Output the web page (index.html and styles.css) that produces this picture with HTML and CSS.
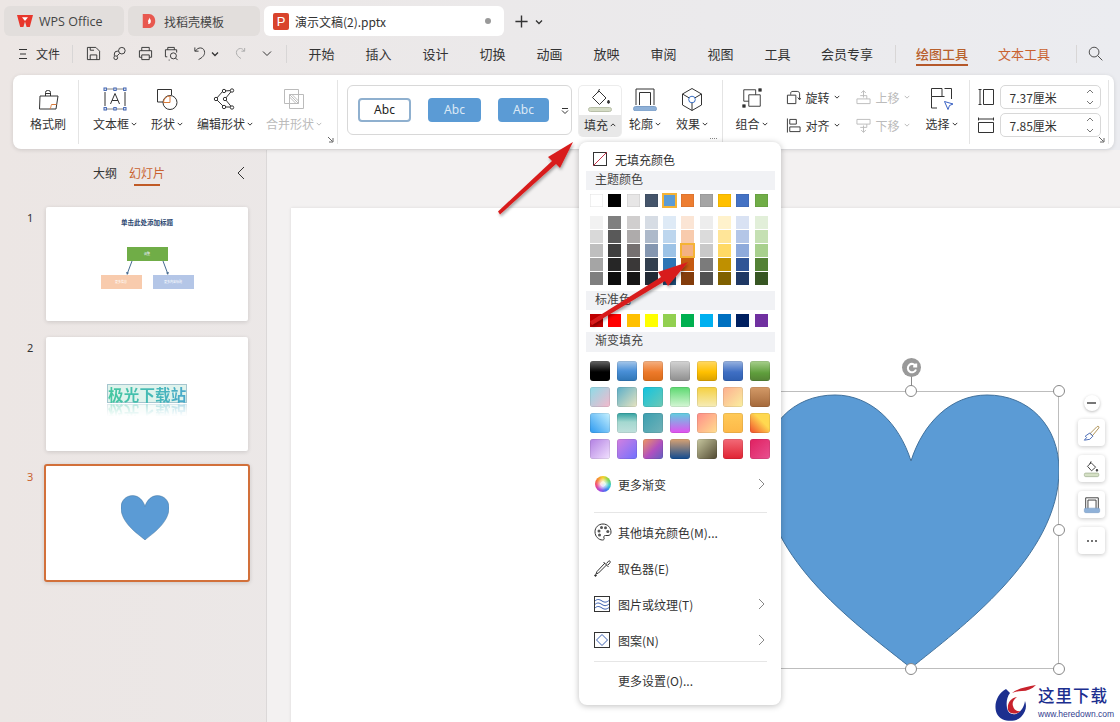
FILE: index.html
```html
<!DOCTYPE html>
<html lang="zh-CN">
<head>
<meta charset="utf-8">
<title>演示文稿(2).pptx - WPS Office</title>
<link rel="stylesheet" href="styles.css">
</head>
<body>
<div class="app">

  <!-- title tabs -->
  <div class="tabbar">
    <div class="tab tab-home">
      <svg class="tab-ico" viewBox="0 0 16 12"><path d="M0 0h16l-3.200 12H9.600L8 6.500 6.400 12H3.200z" fill="#e8372c"/><path d="M5 2.200h6L8 6z" fill="#fff"/></svg>
      <span class="wps-name">WPS Office</span>
    </div>
    <div class="tab tab-tpl">
      <svg class="tab-ico" viewBox="0 0 14 18"><path d="M0 1h7c4 0 7 3.500 7 8s-3 8-7 8H0z" fill="#e8584f"/><path d="M7.500 5c.5 2 2 2.500 1.500 5-.3 1.500-1.500 2.500-3 2.500 1-1.500-.5-2.500 0-4 .5-1 1.300-2 1.500-3.500z" fill="#fff"/></svg>
      <span>找稻壳模板</span>
    </div>
    <div class="tab tab-doc">
      <span class="ppt-badge">P</span>
      <span class="doc-name">演示文稿(2).pptx</span>
      <i class="tab-dot"></i>
    </div>
    <svg class="tab-add" viewBox="0 0 16 16"><path d="M8 1.500v13M1.500 8h13"/></svg>
    <svg class="caret-s tab-more" viewBox="0 0 8 8"><path d="M1 2.500l3 3 3-3"/></svg>
  </div>

  <!-- quick access + menu -->
  <div class="menubar">
    <svg class="burger" viewBox="0 0 9 12"><path d="M0 1.500h8M1 6h6M0 10.500h8"/></svg>
    <span class="file-btn">文件</span>
    <i class="vsep"></i>
    <div class="quick">
      <svg class="q" viewBox="0 0 16 16"><path d="M1.500 1.500h9l4 4v9h-13zM4.500 14.500v-5h7v5M4.500 1.500v3h4"/></svg>
      <svg class="q" viewBox="0 0 16 16"><circle cx="10.500" cy="5" r="3.500"/><path d="M8 8L5.500 10.500M7 5.500H5.500A3 3 0 0 0 2.500 8.500v2"/><circle cx="4" cy="12.500" r="2"/></svg>
      <svg class="q" viewBox="0 0 16 16"><path d="M4 5V1.500h8V5M4 12H1.500V5h13v7H12M4 9.500h8v5H4z"/></svg>
      <svg class="q" viewBox="0 0 16 16"><path d="M4 4V1.500h7V4M3.500 11.500h-2V4h12v3M6 15h-1"/><circle cx="10" cy="10.500" r="3.200"/><path d="M12.300 12.800l2.200 2.200"/></svg>
      <svg class="q q-undo" viewBox="0 0 14 16"><path d="M2 1.500v4h4M2.500 5.500C4 3 6 2 8 2c3 0 4.500 2.500 4.500 5 0 3-2.500 5.500-6.500 7.500"/></svg>
      <svg class="caret-s q-caret" viewBox="0 0 8 8"><path d="M1 2.500l3 3 3-3"/></svg>
      <svg class="q q-redo" viewBox="0 0 12 14"><path d="M10.500 1v3.500H7M10 4.500C9 2.500 7.500 1.500 6 1.500 3.500 1.500 1.500 3.500 1.500 6c0 2 1.500 4.500 5 6.500"/></svg>
      <svg class="caret-m" viewBox="0 0 10 8"><path d="M1 1.500l4 4 4-4"/></svg>
    </div>
    <i class="vsep vsep-b"></i>
    <nav class="nav">
      <span>开始</span><span>插入</span><span>设计</span><span>切换</span><span>动画</span>
      <span>放映</span><span>审阅</span><span>视图</span><span>工具</span>
    </nav>
    <span class="nav-vip">会员专享</span>
    <i class="vsep vsep-c"></i>
    <span class="nav-tool active">绘图工具</span>
    <span class="nav-tool">文本工具</span>
    <i class="vsep vsep-d"></i>
    <svg class="search" viewBox="0 0 16 16"><circle cx="6.500" cy="6.500" r="5.200"/><path d="M10.300 10.300l5 5"/></svg>
  </div>

  <!-- ribbon -->
  <div class="ribbon">
    <div class="rgroup g-brush">
      <div class="tool w-brush">
        <svg class="ico" viewBox="0 0 24 24"><path d="M9.500 9V5.500a2 2 0 0 1 2-2h1a2 2 0 0 1 2 2V9M9.500 6.500h5M4 9h18l-2 13H3.500z"/><path d="M14 22c1-2 1-3 1.500-4.500h5" stroke="#d97a3a"/></svg>
        <span class="lbl">格式刷</span>
      </div>
    </div>
    <div class="rgroup g-shape">
      <div class="tool w-tb">
        <svg class="ico" viewBox="0 0 24 24"><path d="M2 2h20M2 22h20" stroke="#666" stroke-width=".8"/><path d="M7.500 17L12 6.500 16.500 17M9 13.500h6"/><path d="M2 5v14M22 5v14" stroke="#333"/><g fill="#fff" stroke="#3a5fb0"><rect x="1" y="1" width="2.400" height="2.400"/><rect x="20.600" y="1" width="2.400" height="2.400"/><rect x="1" y="20.600" width="2.400" height="2.400"/><rect x="20.600" y="20.600" width="2.400" height="2.400"/><rect x="10.800" y="1" width="2.400" height="2.400"/><rect x="10.800" y="20.600" width="2.400" height="2.400"/></g></svg>
        <span class="lbl">文本框<svg class="caret-s" viewBox="0 0 8 8"><path d="M1 2.500l3 3 3-3"/></svg></span>
      </div>
      <div class="tool w-sh">
        <svg class="ico" viewBox="0 0 24 24"><path d="M9 15H2.500V2.500h14V8"/><circle cx="15" cy="15.500" r="7"/><path d="M15 15.500V9M15 15.500H8.500M8.500 15.500A6.500 6.500 0 0 1 15 9" stroke="#d97a3a"/></svg>
        <span class="lbl">形状<svg class="caret-s" viewBox="0 0 8 8"><path d="M1 2.500l3 3 3-3"/></svg></span>
      </div>
      <div class="tool w-ed">
        <svg class="ico" viewBox="0 0 24 24"><path d="M10 4L3 12l8 8h8M19 3.500L11 4M19 3.500L12 12l7 8.500"/><g fill="#fff" stroke="#333"><circle cx="11" cy="4" r="1.700"/><circle cx="19" cy="3.500" r="1.700"/><circle cx="3" cy="12" r="1.700"/><circle cx="12" cy="12" r="1.700"/><circle cx="11" cy="20" r="1.700"/><circle cx="19" cy="20.500" r="1.700"/></g></svg>
        <span class="lbl">编辑形状<svg class="caret-s" viewBox="0 0 8 8"><path d="M1 2.500l3 3 3-3"/></svg></span>
      </div>
      <div class="tool w-mg off">
        <svg class="ico" viewBox="0 0 24 24"><path d="M2.500 2.500h14v14h-14zM7.500 7.500h14v14h-14zM7.500 7.500l9 9M10 7.500l6.500 6.500M7.500 10l6.500 6.500"/></svg>
        <span class="lbl">合并形状<svg class="caret-s" viewBox="0 0 8 8"><path d="M1 2.500l3 3 3-3"/></svg></span>
      </div>
      <svg class="launcher" viewBox="0 0 7 7"><path d="M1 1l4.500 4.500M6 2v4H2"/></svg>
    </div>
    <div class="rgroup g-style">
      <div class="gallery">
        <span class="abc abc-a">Abc</span>
        <span class="abc abc-b">Abc</span>
        <span class="abc abc-c">Abc</span>
        <svg class="gal-more" viewBox="0 0 8 8"><path d="M1 1.500h6M1 3.500l3 3 3-3"/></svg>
      </div>
      <div class="tool w-fill pressed">
        <svg class="ico" viewBox="0 0 24 24"><path d="M4.500 9.500L11 3l7 7-6.500 6.500zM11.500 1L9.500 5"/><path d="M20.500 12c.8 1.200 1 1.700 1 2.300a1 1 0 0 1-2 0c0-.6.300-1.100 1-2.300z" fill="#333"/><rect x=".500" y="19.500" width="23" height="4" rx="2" fill="#d5dcc5" stroke="#b8bfa8"/></svg>
        <span class="lbl">填充<svg class="caret-s" viewBox="0 0 8 8"><path d="M1 5.500l3-3 3 3"/></svg></span>
      </div>
      <div class="tool w-line">
        <svg class="ico" viewBox="0 0 24 24"><path d="M3 18V2h18v16M6.500 18V5.500h11V18"/><rect x=".500" y="19.500" width="23" height="4.500" rx="2.200" fill="#8fb1d8" stroke="#7ea0c8"/></svg>
        <span class="lbl">轮廓<svg class="caret-s" viewBox="0 0 8 8"><path d="M1 2.500l3 3 3-3"/></svg></span>
      </div>
      <div class="tool w-fx">
        <svg class="ico" viewBox="0 0 24 24"><path d="M12 1.500l9.500 5.500v11L12 23.500 2.500 18V7zM2.500 7l6.500 3.800M21.500 7L15 10.800M12 23.500V15.500"/><circle cx="12" cy="12.500" r="3.300" stroke="#3a6fc4"/></svg>
        <span class="lbl">效果<svg class="caret-s" viewBox="0 0 8 8"><path d="M1 2.500l3 3 3-3"/></svg></span>
      </div>
      <span class="dots-mark"></span>
    </div>
    <div class="rgroup g-arrange">
      <div class="tool w-grp">
        <svg class="ico ico-grp" viewBox="0 0 24 24"><path d="M8.500 15.500H3V3h13v5.500M8.500 8.500H21V21H8.500z"/><rect x="19.500" y="2" width="2.500" height="2.500" fill="#333"/><rect x="2" y="19.500" width="2.500" height="2.500" fill="#333"/></svg>
        <span class="lbl">组合<svg class="caret-s" viewBox="0 0 8 8"><path d="M1 2.500l3 3 3-3"/></svg></span>
      </div>
      <div class="stack w-rot">
        <div class="mini">
          <svg class="mi" viewBox="0 0 16 16"><path d="M1.500 5.500h9v9h-9zM5 5V3.500C5 2 6 1.500 7.500 1.500H12c1.500 0 2.500 1 2.500 2.500v6M12.500 8l2 2.500 2-2.500"/></svg>
          <span>旋转</span><svg class="caret-s" viewBox="0 0 8 8"><path d="M1 2.500l3 3 3-3"/></svg>
        </div>
        <div class="mini">
          <svg class="mi" viewBox="0 0 16 16"><path d="M1.500 .5v15M4 1.500h7v5H4zM4 9.500h11v5H4z"/></svg>
          <span>对齐</span><svg class="caret-s" viewBox="0 0 8 8"><path d="M1 2.500l3 3 3-3"/></svg>
        </div>
      </div>
      <div class="stack w-mv off">
        <div class="mini">
          <svg class="mi" viewBox="0 0 16 16"><path d="M8 8V.8M5.500 3L8 .8 10.500 3M4.500 6h7v3.500M1 9.500h14v5H1z"/></svg>
          <span>上移</span><svg class="caret-s" viewBox="0 0 8 8"><path d="M1 2.500l3 3 3-3"/></svg>
        </div>
        <div class="mini">
          <svg class="mi" viewBox="0 0 16 16"><path d="M8 8v7.200M5.500 13L8 15.200 10.500 13M4.500 10h7V6.500M1 6.500h14v-5H1z"/></svg>
          <span>下移</span><svg class="caret-s" viewBox="0 0 8 8"><path d="M1 2.500l3 3 3-3"/></svg>
        </div>
      </div>
      <div class="tool w-sel">
        <svg class="ico" viewBox="0 0 24 24"><path d="M7 21H1.500V9.500h13M1.500 9.500V1.500H12v8M14.500 1.500h7V12"/><path d="M14.500 14.500l8.500 2.500-3.500 1.500-1.500 4z" fill="#fff" stroke="#3a62c4"/></svg>
        <span class="lbl">选择<svg class="caret-s" viewBox="0 0 8 8"><path d="M1 2.500l3 3 3-3"/></svg></span>
      </div>
    </div>
    <div class="rgroup g-size">
      <div class="size-row">
        <svg class="si" viewBox="0 0 16 16"><path d="M.5 .5h3M.5 15.500h3M2 .5v15M5.500 .5h10v15h-10z"/></svg>
        <div class="spin"><span>7.37厘米</span><svg viewBox="0 0 8 18"><path d="M1 5l3-3 3 3M1 13l3 3 3-3"/></svg></div>
      </div>
      <div class="size-row">
        <svg class="si" viewBox="0 0 16 16"><path d="M.5 .5v3M15.500 .5v3M.5 2h15M.5 5.500h15v10H.5z"/></svg>
        <div class="spin"><span>7.85厘米</span><svg viewBox="0 0 8 18"><path d="M1 5l3-3 3 3M1 13l3 3 3-3"/></svg></div>
      </div>
      <svg class="launcher" viewBox="0 0 7 7"><path d="M1 1l4.500 4.500M6 2v4H2"/></svg>
    </div>
    <div class="rgroup g-tail"></div>
  </div>

  <!-- main -->
  <div class="main">
    <aside class="side">
      <div class="side-tabs">
        <span class="st">大纲</span>
        <span class="st st-on">幻灯片</span>
        <svg class="side-back" viewBox="0 0 8 14"><path d="M7 1L1 7l6 6"/></svg>
      </div>
      <div class="thumb-row">
        <span class="num">1</span>
        <div class="thumb th1">
          <div class="th1-title">单击此处添加标题</div>
          <div class="th1-top"><span>调整</span></div>
          <svg class="th1-lines" viewBox="0 0 93 14"><path d="M31 0L26.500 12M62 0L66.500 12" stroke="#44698f"/><path d="M25 11l1 3 2-2.300zM68 11l-1 3-2-2.300z" fill="#44698f" stroke="none"/></svg>
          <div class="th1-bottom"><span class="peach">更多信息</span><span class="lav">更多内容标题</span></div>
        </div>
      </div>
      <div class="thumb-row">
        <span class="num">2</span>
        <div class="thumb th2">
          <div class="th2-word"><span>极光下载站</span></div>
        </div>
      </div>
      <div class="thumb-row row-cur">
        <span class="num">3</span>
        <div class="thumb th3">
          <svg class="th3-heart" viewBox="0 0 296 278"><path d="M148 277C100 238 0 170 0 79 0 35 30 4 72 4c36 0 64 28 76 66C160 32 188 4 224 4c42 0 72 31 72 75 0 91-100 159-148 198z" fill="#5b9bd5" stroke="#41719c" stroke-width="3"/></svg>
        </div>
      </div>
    </aside>
    <section class="canvas">
      <div class="slide">
        <div class="sel">
          <svg class="heart" viewBox="0 0 296 278"><path d="M148 277C100 238 0 170 0 79 0 35 30 4 72 4c36 0 64 28 76 66C160 32 188 4 224 4c42 0 72 31 72 75 0 87-100 159-148 198z" fill="#5b9bd5" stroke="#41719c"/></svg>
          <i class="h h-tm"></i><i class="h h-tr"></i><i class="h h-mr"></i><i class="h h-bm"></i><i class="h h-br"></i>
          <i class="rot-line"></i>
          <span class="rot"><svg viewBox="0 0 12 12"><path d="M9.800 4.200A4.200 4.200 0 1 0 10 7.500M10.200 1.500v3h-3"/></svg></span>
        </div>
        <div class="float-tools">
          <span class="ft-min"><i></i></span>
          <span class="ft"><svg viewBox="0 0 20 20"><path d="M8 10.500L15.500 3c1.200-1 3-.2 2 1.500L10.500 13z" stroke="#a88a4a"/><path d="M7.500 10L11 13.500 7.500 17 1.500 18l2.500-3-1.500-1.500z" stroke="#3a5fb0"/></svg></span>
          <span class="ft"><svg viewBox="0 0 20 20"><path d="M5 7l4-4 5 5-4.500 4zM9 1.500L7.500 4.500"/><path d="M15.500 10c.6.900.8 1.300.8 1.700a.8.800 0 0 1-1.600 0c0-.4.200-.8.800-1.700z" fill="#333"/><rect x="1.500" y="14.500" width="16" height="4" rx="1.500" fill="#d5e0c5" stroke="#98a888" stroke-width=".7"/></svg></span>
          <span class="ft"><svg viewBox="0 0 20 20"><path d="M3 15V2h14v13M5.500 15V4.500h9V15"/><rect x="1.500" y="13.500" width="17" height="5" rx="1.500" fill="#8fb1d8" stroke="#7ea0c8" stroke-width=".7"/></svg></span>
          <span class="ft"><svg class="ft-dots" viewBox="0 0 12 4"><circle cx="2" cy="2" r="1"/><circle cx="6" cy="2" r="1"/><circle cx="10" cy="2" r="1"/></svg></span>
        </div>
      </div>
    </section>
  </div>

  <!-- fill dropdown -->
  <div class="popup">
    <div class="nofill">
      <svg class="nf-ico" viewBox="0 0 14 14"><rect x=".5" y=".5" width="13" height="13" fill="none" stroke="#333"/><path d="M0 14L14 0" stroke="#c8324a"/></svg>
      <span>无填充颜色</span>
    </div>
    <div class="band">主题颜色</div>
    <div class="swatches theme"><i></i><i></i><i></i><i></i><i class="on"></i><i></i><i></i><i></i><i></i><i></i></div>
    <div class="swatches tints">
      <i></i><i></i><i></i><i></i><i></i><i></i><i></i><i></i><i></i><i></i>
      <i></i><i></i><i></i><i></i><i></i><i></i><i></i><i></i><i></i><i></i>
      <i></i><i></i><i></i><i></i><i></i><i class="on"></i><i></i><i></i><i></i><i></i>
      <i></i><i></i><i></i><i></i><i></i><i></i><i></i><i></i><i></i><i></i>
      <i></i><i></i><i></i><i></i><i></i><i></i><i></i><i></i><i></i><i></i>
    </div>
    <div class="band band-std">标准色</div>
    <div class="swatches std"><i></i><i></i><i></i><i></i><i></i><i></i><i></i><i></i><i></i><i></i></div>
    <div class="band band-grad">渐变填充</div>
    <div class="grads">
      <i></i><i></i><i></i><i></i><i></i><i></i><i></i>
      <i></i><i></i><i></i><i></i><i></i><i></i><i></i>
      <i></i><i></i><i></i><i></i><i></i><i></i><i></i>
      <i></i><i></i><i></i><i></i><i></i><i></i><i></i>
    </div>
    <div class="pop-item it-more">
      <span class="wheel"></span><span class="it-txt">更多渐变</span>
      <svg class="chev" viewBox="0 0 7 12"><path d="M1 1l5 5-5 5"/></svg>
    </div>
    <hr class="pop-sep sep-1">
    <div class="pop-item">
      <svg class="it-ico" viewBox="0 0 18 18"><path d="M9 1C4.500 1 1 4.300 1 8.800S4.500 17 8.500 17c1.500 0 2-1 1.500-2-.6-1.300 0-2.500 1.500-2.500H14c2 0 3-1.500 3-3.500 0-4.500-3.500-8-8-8z"/><g fill="#555" stroke="none"><circle cx="5" cy="8" r="1.500"/><circle cx="7.500" cy="4.500" r="1.500"/><circle cx="11.500" cy="4.800" r="1.500"/><circle cx="13.800" cy="8.500" r="1.500"/><circle cx="5.500" cy="12" r="1.500"/></g></svg>
      <span class="it-txt">其他填充颜色(M)...</span>
    </div>
    <div class="pop-item">
      <svg class="it-ico" viewBox="0 0 18 18"><path d="M11 4L3 12.500 2 15l2.500-1L13 5.500M9.500 3l5 5M12.500 4.500l2-2.300c1-1 2.500.5 1.500 1.500l-2 2.300"/><circle cx="1.500" cy="16.500" r=".8" fill="#333"/></svg>
      <span class="it-txt">取色器(E)</span>
    </div>
    <div class="pop-item">
      <svg class="it-ico it-sq" viewBox="0 0 16 16"><rect x=".5" y=".5" width="15" height="15"/><path d="M1 5c2-2 4-2 7 0s5 1 7-.5M1 8.500c2-2 4-2 7 0s5 1 7-.5M1 12c2-2 4-2 7 0s5 1 7-.5" stroke="#3a5fb0"/></svg>
      <span class="it-txt">图片或纹理(T)</span>
      <svg class="chev" viewBox="0 0 7 12"><path d="M1 1l5 5-5 5"/></svg>
    </div>
    <div class="pop-item">
      <svg class="it-ico it-sq" viewBox="0 0 16 16"><rect x=".5" y=".5" width="15" height="15"/><path d="M8 2.500L13.500 8 8 13.500 2.500 8z" stroke="#3a5fb0" stroke-linejoin="round"/></svg>
      <span class="it-txt">图案(N)</span>
      <svg class="chev" viewBox="0 0 7 12"><path d="M1 1l5 5-5 5"/></svg>
    </div>
    <hr class="pop-sep sep-2">
    <div class="pop-item it-last"><span class="it-txt">更多设置(O)...</span></div>
  </div>

  <!-- red arrows drawn on the shot -->
  <svg class="arrows" viewBox="0 0 1120 722">
    <defs><filter id="sh" x="-20%" y="-20%" width="140%" height="140%"><feDropShadow dx="1" dy="2" stdDeviation="1.500" flood-color="#000" flood-opacity=".35"/></filter></defs>
    <g filter="url(#sh)" fill="#d81e1e">
      <path d="M498 211.500L552 161l-4-4 25-15-13 26-4-4-56 50.500z"/>
      <path d="M590 321.500L661 277l-3-5 30-10-20 24-3-5-73 44z"/>
    </g>
  </svg>

  <!-- watermark -->
  <div class="mark">
    <svg class="mark-logo" viewBox="0 0 42 38"><path d="M12 4C3 9-1 20 3 29c4 8 18 9 24 3 5-5 6-11 4-16-1 6-4 11-9 13-5 1-8-1-9-6-1-6 0-11 3-15z" fill="#1c2f8f"/><path d="M14 25c-1-6 2-12 9-13-4 3-5 6-4 9 1 4 4 6 8 5-4 3-11 4-13-1z" fill="#c8222c"/><path d="M18 8C24 3 33 2 42 0c-4 4-9 6-14 6-4 0-7 1-10 2z" fill="#c8222c"/></svg>
    <div class="mark-txt"><b>这里下载</b><span>www.heredown.com</span></div>
  </div>
</div>
</body>
</html>
```

FILE: styles.css
```css
* { box-sizing: border-box; }
html, body { margin: 0; padding: 0; }
body {
  width: 1120px; height: 722px; overflow: hidden;
  font-family: "Noto Sans CJK SC", "Noto Sans", sans-serif;
  font-size: 12px; color: #333;
}
svg { fill: none; stroke: #333; stroke-width: 1; display: block; flex: none; }
.app {
  position: relative; width: 1120px; height: 722px;
  display: flex; flex-direction: column;
  background: linear-gradient(90deg, #ece6e4 0%, #ebe9ea 45%, #ebecf0 100%);
}

/* tabs */
.tabbar { height: 37px; padding: 6px 0 1px 4px; display: flex; align-items: stretch; }
.tab { display: flex; align-items: center; border-radius: 6px; background: #e2dedc; margin-right: 4px; color: #444; }
.tab-home { width: 120px; padding-left: 13px; }
.tab-tpl { width: 132px; padding-left: 13px; }
.tab-doc { width: 240px; padding-left: 9px; background: #fff; color: #333; }
.tab-ico { stroke: none; height: 16px; width: 16px; }
.tab-home .tab-ico { margin-right: 6px; height: 12px; }
.tab-tpl .tab-ico { margin-right: 7px; }
.wps-name { font-family: "Open Sans", sans-serif; font-size: 12.5px; }
.ppt-badge {
  width: 16px; height: 17px; background: #d9432c; color: #fff; border-radius: 2px;
  font: 13px/17px "Liberation Sans", sans-serif; text-align: center; margin-right: 6px;
}
.doc-name { flex: 1; font-size: 12px; }
.tab-dot { width: 6px; height: 6px; border-radius: 3px; background: #999; margin-right: 13px; }
.tab-add { width: 15px; height: 15px; margin: 8px 0 0 6px; stroke-width: 1.500; }
.tab-more { margin: 12px 0 0 6px; }
.caret-s { width: 6px; height: 6px; display: inline-block; stroke-width: 1.300; }
.tab-more, .q-caret { width: 8px; height: 8px; }
.caret-m { width: 10px; height: 8px; }

/* menu row */
.menubar { height: 38px; display: flex; align-items: center; padding-left: 19px; font-size: 13px; padding-bottom: 5px; }
.burger { width: 9px; height: 12px; }
.file-btn { margin-left: 8px; width: 24px; font-size: 12px; }
.vsep { width: 1px; height: 18px; background: #d8d6d6; margin-left: 12px; }
.quick { display: flex; align-items: center; margin-left: 13px; }
.q { width: 15px; height: 15px; margin-right: 11px; }
.q-undo { width: 13px; margin-right: 5px; margin-left: 3px; }
.q-caret { margin-right: 16px; }
.q-redo { width: 11px; height: 13px; margin-right: 16px; stroke: #aaa; }
.vsep-b { margin-left: 14px; }
.nav { display: flex; margin-left: 6px; }
.nav span { width: 57px; text-align: center; }
.nav-vip { margin-left: 15px; width: 52px; }
.vsep-c { margin-left: 22px; }
.nav-tool { color: #c9622f; width: 52px; margin-left: 20px; position: relative; }
.vsep + .nav-tool { margin-left: 20px; }
.nav-tool + .nav-tool { margin-left: 30px; }
.nav-tool.active { font-weight: 500; color: #b8602c; }
.nav-tool.active::after { content: ""; position: absolute; left: 0; right: 0; bottom: -3px; height: 2px; background: #b5582a; }
.vsep-d { margin-left: 26px; }
.search { width: 15px; height: 15px; margin-left: 11px; stroke: #444; }

/* ribbon */
.ribbon {
  height: 74px; width: 1101px; margin-left: 13px; position: relative; z-index: 2;
  background: #fff; border-radius: 8px; box-shadow: 0 1px 4px rgba(0, 0, 0, .13);
  display: flex; padding: 5px 0;
}
.rgroup { position: relative; display: flex; flex: none; border-right: 1px solid #e4e4e4; }
.g-brush { width: 66px; }
.g-shape { width: 259px; }
.g-style { width: 384.500px; padding: 5px 0 0 9px; align-items: flex-start; }
.g-arrange { width: 247px; }
.g-size { width: 139.500px; flex-direction: column; padding: 5px 0 0 8px; gap: 4px; }
.g-tail { border-right: 0; flex: 1; }
.tool { display: flex; flex: none; flex-direction: column; align-items: center; padding-top: 7px; height: 60px; white-space: nowrap; }
.ico { width: 24px; height: 24px; }
.ico-grp { width: 22px; height: 22px; }
.lbl { margin-top: 4px; line-height: 18px; display: flex; align-items: center; gap: 2px; }
.ico-grp + .lbl { margin-top: 6px; }
.off { color: #bbb; }
.off svg { stroke: #bbb; }
.w-brush { width: 70px; }
.w-tb { width: 52px; margin-left: 10px; }
.w-sh { width: 48px; margin-left: 2px; }
.w-ed { width: 66px; margin-left: 1px; }
.w-mg { width: 66px; margin-left: 3px; }
.launcher { position: absolute; right: 3px; bottom: 1px; width: 7px; height: 7px; stroke: #666; }
.gallery {
  width: 225px; height: 50px; flex: none; border: 1px solid #d8d8d8; border-radius: 6px;
  display: flex; align-items: center; padding-left: 10px; position: relative;
}
.abc {
  width: 53px; height: 24px; border-radius: 4px; text-align: center; line-height: 23px;
  font-family: "Noto Sans", sans-serif; font-size: 12px; margin-right: 17px;
  background: #5b9bd5; color: #dce9f5;
}
.abc-a { background: #fff; color: #222; border: 2px solid #8fb0cf; line-height: 20px; }
.abc-c { width: 51px; }
.gal-more { position: absolute; right: 2px; top: 21px; width: 8px; height: 8px; }
.w-fill, .w-line, .w-fx { height: 52px; padding-top: 2px; }
.w-fill { width: 44px; margin-left: 6px; border-radius: 5px; background: linear-gradient(#fff 0, #fff 56%, #e8e8e8 56%); border: 1px solid #ececec; border-bottom: 0; }
.w-line { width: 40px; margin-left: 3px; }
.w-fx { width: 40px; margin-left: 7px; }
.dots-mark { position: absolute; right: 5px; bottom: 3px; width: 7px; height: 3px; border-top: 1px dotted #888; }
.w-grp { width: 46px; margin-left: 6px; }
.stack { display: flex; flex: none; flex-direction: column; padding-top: 9px; gap: 12px; }
.w-rot { margin-left: 11px; width: 70px; }
.w-mv { width: 62px; }
.mini { display: flex; align-items: center; height: 16px; }
.mi { width: 15px; height: 15px; margin-right: 5px; }
.mini span { margin-right: 4px; }
.w-sel { width: 40px; margin-left: 4px; }
.size-row { display: flex; align-items: center; gap: 6px; }
.si { width: 16px; height: 16px; }
.spin {
  width: 101px; height: 24px; border: 1px solid #d8d8d8; border-radius: 5px;
  display: flex; align-items: center; justify-content: space-between; padding: 0 6px 0 9px;
}
.spin svg { width: 8px; height: 18px; stroke: #777; }

/* main */
.main { flex: 1; display: flex; min-height: 0; margin-top: 1px; }
.side { width: 267px; border-right: 1px solid #dbd8d8; position: relative; }
.side-tabs { height: 48px; display: flex; padding: 13px 0 0 93px; line-height: 19px; font-size: 12px; position: relative; }
.st { width: 24px; margin-right: 12px; }
.st-on { color: #c9622f; width: 36px; position: relative; }
.st-on::after { content: ""; position: absolute; left: 5px; right: 5px; top: 21px; height: 2px; background: #c05a26; }
.side-back { width: 8px; height: 14px; position: absolute; left: 237px; top: 16px; }
.thumb-row { display: flex; height: 114px; margin: 9px 0 16px; padding-left: 27px; }
.num { width: 19px; font-family: "Noto Sans", sans-serif; font-size: 11px; line-height: 22px; }
.thumb { width: 202px; height: 114px; background: #fff; box-shadow: 0 1px 4px rgba(0, 0, 0, .14); border-radius: 2px; }
.row-cur { margin-top: -3px; height: 118px; padding-left: 27px; }
.row-cur .num { color: #c9622f; width: 17px; padding-top: 2px; }
.th3 { width: 206px; height: 118px; border: 2px solid #d2703a; border-radius: 3px; display: flex; align-items: center; justify-content: center; }
.th3-heart { width: 48px; height: 47px; stroke: none; margin: -12px 0 0 -4px; }
.th1 { display: flex; flex-direction: column; align-items: center; padding-top: 10px; }
.th1-title { font-size: 6.500px; line-height: 10px; font-weight: 700; color: #2c4770; }
.th1-top { width: 41px; height: 14px; margin-top: 20px; background: #70ad47; color: #eef; font-size: 3px; line-height: 14px; text-align: center; }
.th1-lines { width: 93px; height: 14px; }
.th1-bottom { display: flex; gap: 11px; }
.th1-bottom span { width: 41px; height: 14px; font-size: 3px; line-height: 14px; text-align: center; color: #fff; }
.peach { background: #f8cbad; }
.lav { background: #b4c6e7; }
.th2 { display: flex; flex-direction: column; align-items: center; padding-top: 47px; }
.th2-word {
  width: 80px; height: 19px; font-size: 15.500px; line-height: 19px; font-weight: 700; text-align: center;
  background: #dff3ec; border: 1px solid #a5c6cf; white-space: nowrap; letter-spacing: .2px;
  -webkit-box-reflect: below 1px linear-gradient(transparent 35%, rgba(255, 255, 255, .4));
}
.th2-word span {
  background: linear-gradient(90deg, #45c8a0, #45b8b8 60%, #4aa8cc);
  -webkit-background-clip: text; background-clip: text; color: transparent;
}
.canvas { flex: 1; padding: 58px 0 0 24px; background: #f3f1f1; overflow: hidden; position: relative; }
.slide { width: 900px; height: 520px; background: #fff; position: relative; box-shadow: 0 0 3px rgba(0, 0, 0, .1); }
.sel { position: absolute; left: 472px; top: 183px; width: 296px; height: 278px; border: 1px solid #bdbdbd; }
.heart { position: absolute; left: -1px; top: -1px; width: 296px; height: 278px; }
.h { position: absolute; width: 12px; height: 12px; border-radius: 50%; background: #fff; border: 1px solid #888; }
.h-tm { left: 141px; top: -7px; }
.h-tr { right: -7px; top: -7px; }
.h-mr { right: -7px; top: 132px; }
.h-bm { left: 141px; bottom: -7px; }
.h-br { right: -7px; bottom: -7px; }
.rot-line { position: absolute; left: 147px; top: -17px; width: 1px; height: 11px; background: #888; }
.rot { position: absolute; left: 138px; top: -34px; width: 19px; height: 19px; border-radius: 50%; background: #999; display: flex; align-items: center; justify-content: center; }
.rot svg { width: 12px; height: 12px; stroke: #fff; stroke-width: 2; }
.float-tools { position: absolute; left: 787px; top: 187px; width: 27px; display: flex; flex-direction: column; align-items: center; gap: 9px; }
.ft-min { width: 16px; height: 16px; border-radius: 50%; background: #fff; box-shadow: 0 1px 3px rgba(0, 0, 0, .25); display: flex; align-items: center; justify-content: center; margin-bottom: -1px; }
.ft-min i { width: 9px; height: 2px; background: #777; }
.ft { width: 27px; height: 27px; border-radius: 4px; background: #fff; box-shadow: 0 1px 4px rgba(0, 0, 0, .22); display: flex; align-items: center; justify-content: center; }
.ft svg { width: 18px; height: 18px; }
.ft .ft-dots { width: 12px; height: 4px; fill: #444; stroke: none; }

/* dropdown */
.popup {
  position: absolute; left: 579px; top: 142px; width: 202px; height: 563px; z-index: 3;
  background: #fff; border-radius: 8px; box-shadow: 0 1px 6px rgba(0, 0, 0, .25);
  padding: 8px 6px 0 7px; color: #333;
}
.nofill { display: flex; align-items: center; height: 20px; padding-left: 7px; padding-bottom: 2px; }
.nf-ico { width: 14px; height: 14px; margin-right: 8px; }
.band { height: 19px; background: #f1f2f5; line-height: 16px; padding-left: 9px; margin-top: 1px; color: #444; }
.swatches { display: grid; grid-template-columns: repeat(10, 13px); column-gap: 5.300px; margin-left: 4px; }
.swatches i { height: 13px; display: block; position: relative; }
.theme { margin-top: 4px; }
.theme i { box-shadow: inset 0 0 0 .5px rgba(0, 0, 0, .12); }
.tints { margin-top: 9px; row-gap: 1px; }
.swatches i.on { outline: 2px solid #f5b335; outline-offset: -1px; z-index: 1; }
.std { margin-top: 4px; }
.band-std { margin-top: 6px; }
.band-grad { margin-top: 5px; height: 20px; }
.grads { display: grid; grid-template-columns: repeat(7, 20px); column-gap: 6.700px; row-gap: 6px; margin: 9px 0 0 4px; }
.grads i { height: 20px; display: block; border-radius: 3px; box-shadow: inset 0 0 0 .5px rgba(0, 0, 0, .15); }
.pop-item { height: 36px; display: flex; align-items: center; position: relative; padding-left: 32px; }
.it-more { margin-top: 7px; }
.it-ico { position: absolute; left: 8px; top: 9px; width: 18px; height: 18px; }
.it-sq { width: 16px; height: 16px; top: 10px; left: 8px; }
.wheel { position: absolute; left: 9px; top: 10px; width: 16px; height: 16px; border-radius: 50%; background: conic-gradient(#f5d020, #7bd44a, #30c8d0, #3a6ff0, #a040e0, #f04080, #f5802a, #f5d020); }
.wheel::after { content: ""; position: absolute; left: 5px; top: 5px; width: 6px; height: 6px; border-radius: 50%; background: rgba(255, 255, 255, .85); box-shadow: 0 0 3px 2px rgba(255, 255, 255, .7); }
.chev { position: absolute; right: 10px; top: 12px; width: 7px; height: 12px; stroke: #888; }
.pop-sep { border: 0; height: 1px; background: #e6e6e6; margin: 0 8px; }
.sep-1 { margin-top: 10px; margin-bottom: 1px; }
.sep-2 { margin-top: 3px; margin-bottom: 0; }

/* colour data */
.theme i:nth-child(1) { background: #fff; } .theme i:nth-child(2) { background: #000; } .theme i:nth-child(3) { background: #e7e6e6; } .theme i:nth-child(4) { background: #44546a; } .theme i:nth-child(5) { background: #5b9bd5; }
.theme i:nth-child(6) { background: #ed7d31; } .theme i:nth-child(7) { background: #a5a5a5; } .theme i:nth-child(8) { background: #ffc000; } .theme i:nth-child(9) { background: #4472c4; } .theme i:nth-child(10) { background: #70ad47; }
.tints i:nth-child(1) { background: #f2f2f2; } .tints i:nth-child(2) { background: #7f7f7f; } .tints i:nth-child(3) { background: #d0cece; } .tints i:nth-child(4) { background: #d6dce4; } .tints i:nth-child(5) { background: #deeaf6; }
.tints i:nth-child(6) { background: #fbe5d5; } .tints i:nth-child(7) { background: #ededed; } .tints i:nth-child(8) { background: #fff2cc; } .tints i:nth-child(9) { background: #d9e2f3; } .tints i:nth-child(10) { background: #e2efd9; }
.tints i:nth-child(11) { background: #d9d9d9; } .tints i:nth-child(12) { background: #595959; } .tints i:nth-child(13) { background: #aeabab; } .tints i:nth-child(14) { background: #adb9ca; } .tints i:nth-child(15) { background: #bdd6ee; }
.tints i:nth-child(16) { background: #f8cbad; } .tints i:nth-child(17) { background: #dbdbdb; } .tints i:nth-child(18) { background: #ffe598; } .tints i:nth-child(19) { background: #b4c6e7; } .tints i:nth-child(20) { background: #c5e0b3; }
.tints i:nth-child(21) { background: #bfbfbf; } .tints i:nth-child(22) { background: #3f3f3f; } .tints i:nth-child(23) { background: #757070; } .tints i:nth-child(24) { background: #8496b0; } .tints i:nth-child(25) { background: #9dc3e6; }
.tints i:nth-child(26) { background: #f4b183; } .tints i:nth-child(27) { background: #c9c9c9; } .tints i:nth-child(28) { background: #ffd965; } .tints i:nth-child(29) { background: #8eaadb; } .tints i:nth-child(30) { background: #a8d08d; }
.tints i:nth-child(31) { background: #a5a5a5; } .tints i:nth-child(32) { background: #262626; } .tints i:nth-child(33) { background: #3a3838; } .tints i:nth-child(34) { background: #323f4f; } .tints i:nth-child(35) { background: #2e75b5; }
.tints i:nth-child(36) { background: #c55a11; } .tints i:nth-child(37) { background: #7b7b7b; } .tints i:nth-child(38) { background: #bf9000; } .tints i:nth-child(39) { background: #2f5496; } .tints i:nth-child(40) { background: #538135; }
.tints i:nth-child(41) { background: #7f7f7f; } .tints i:nth-child(42) { background: #0c0c0c; } .tints i:nth-child(43) { background: #171616; } .tints i:nth-child(44) { background: #222a35; } .tints i:nth-child(45) { background: #1f4e79; }
.tints i:nth-child(46) { background: #833c0b; } .tints i:nth-child(47) { background: #525252; } .tints i:nth-child(48) { background: #7f6000; } .tints i:nth-child(49) { background: #1f3864; } .tints i:nth-child(50) { background: #375623; }
.std i:nth-child(1) { background: #c00000; } .std i:nth-child(2) { background: #f00; } .std i:nth-child(3) { background: #ffc000; } .std i:nth-child(4) { background: #ff0; } .std i:nth-child(5) { background: #92d050; }
.std i:nth-child(6) { background: #00b050; } .std i:nth-child(7) { background: #00b0f0; } .std i:nth-child(8) { background: #0070c0; } .std i:nth-child(9) { background: #002060; } .std i:nth-child(10) { background: #7030a0; }
.grads i:nth-child(1) { background: linear-gradient(#666, #000 55%); }
.grads i:nth-child(2) { background: linear-gradient(#a8c8ea, #4a90d8 50%, #2e75b5); }
.grads i:nth-child(3) { background: linear-gradient(#f4b183, #ee7a2a 55%, #d86a18); }
.grads i:nth-child(4) { background: linear-gradient(#d4d4d4, #8e8e8e); }
.grads i:nth-child(5) { background: linear-gradient(#ffd966, #ffc000 55%, #d8a000); }
.grads i:nth-child(6) { background: linear-gradient(#9ab4e0, #3f6fc4 55%, #2f5fb0); }
.grads i:nth-child(7) { background: linear-gradient(#a8d08d, #5f9e3c 60%, #548235); }
.grads i:nth-child(8) { background: linear-gradient(135deg, #8cdce8, #f6b8cc); }
.grads i:nth-child(9) { background: linear-gradient(135deg, #5aaec8, #e8e4c0); }
.grads i:nth-child(10) { background: linear-gradient(135deg, #10c4e0, #6ec8b4); }
.grads i:nth-child(11) { background: linear-gradient(#5cd870, #d6f6d6); }
.grads i:nth-child(12) { background: linear-gradient(#f5d040, #f6ecb8); }
.grads i:nth-child(13) { background: linear-gradient(135deg, #fdae90, #faf0a0); }
.grads i:nth-child(14) { background: linear-gradient(#d49a68, #a4683a); }
.grads i:nth-child(15) { background: linear-gradient(45deg, #2a98f0, #c8f2ff); }
.grads i:nth-child(16) { background: linear-gradient(#2fa0a0, #a4d8d0 45%, #c0e0dc); }
.grads i:nth-child(17) { background: linear-gradient(135deg, #3a9fb0, #72b2b8); }
.grads i:nth-child(18) { background: linear-gradient(#60d0e0, #e450f0); }
.grads i:nth-child(19) { background: linear-gradient(135deg, #ff8c88, #ffe090); }
.grads i:nth-child(20) { background: linear-gradient(#ffca58, #fdb848); }
.grads i:nth-child(21) { background: linear-gradient(45deg, #f04a2a, #ffd850 60%); }
.grads i:nth-child(22) { background: linear-gradient(135deg, #b280e2, #f2e2ff); }
.grads i:nth-child(23) { background: linear-gradient(135deg, #d480e0, #7070ff); }
.grads i:nth-child(24) { background: linear-gradient(135deg, #f09860, #b050c0 55%, #6060c0); }
.grads i:nth-child(25) { background: linear-gradient(#d8a272, #104a90); }
.grads i:nth-child(26) { background: linear-gradient(135deg, #c8c8a0, #504830); }
.grads i:nth-child(27) { background: linear-gradient(#f26a78, #e02232); }
.grads i:nth-child(28) { background: linear-gradient(135deg, #e02060, #e85090); }

/* overlays */
.arrows { position: absolute; left: 0; top: 0; width: 1120px; height: 722px; z-index: 5; stroke: none; pointer-events: none; }
.mark { position: absolute; left: 994px; top: 685px; display: flex; z-index: 4; }
.mark-logo { width: 42px; height: 38px; stroke: none; }
.mark-txt { margin-left: 2px; display: flex; flex-direction: column; }
.mark-txt b { font-size: 16.500px; line-height: 20px; color: #1c2f8f; letter-spacing: 1px; font-weight: 500; }
.mark-txt span { font: 8.500px/13px "Liberation Sans", sans-serif; color: #33408f; margin-top: 3px; white-space: nowrap; }
```
